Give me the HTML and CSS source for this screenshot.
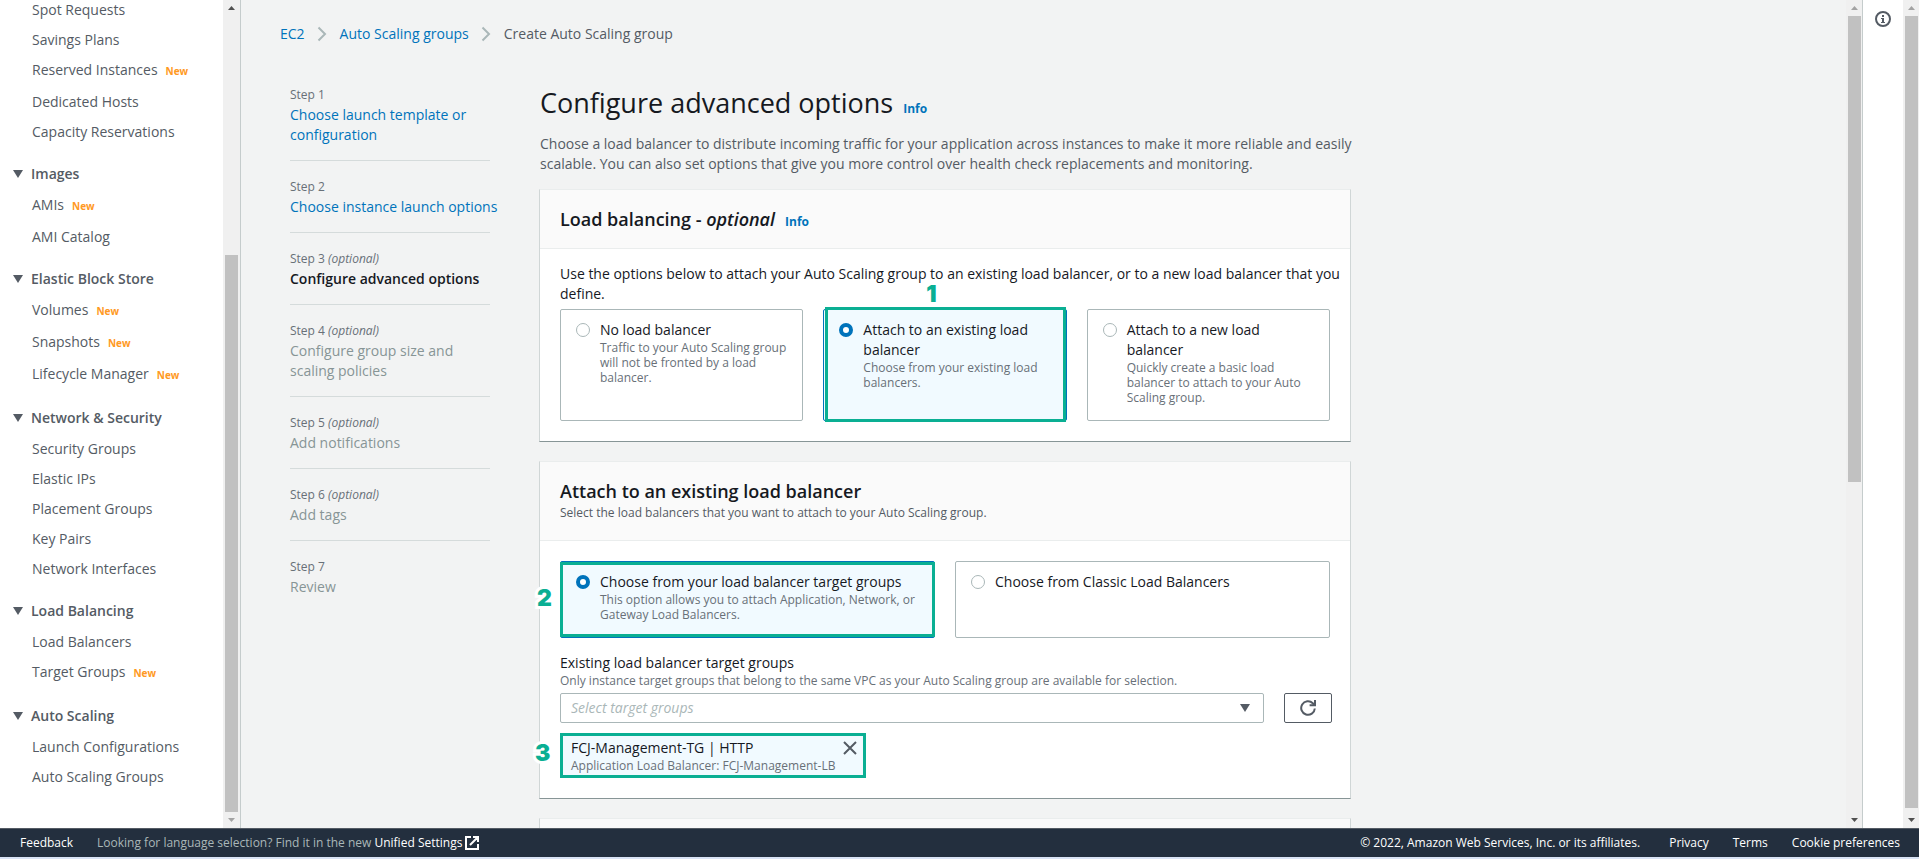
FILE: index.html
```
<!DOCTYPE html>
<html lang="en">
<head>
<meta charset="utf-8">
<title>Create Auto Scaling group | EC2</title>
<link rel="stylesheet" href="styles.css">
</head>
<body>
<div class="app">
  <div class="workspace">
    <nav class="sidebar" aria-label="EC2">
      <div class="sidebar-content">
        <ul class="nav-list">
          <li><a href="#">Spot Requests</a></li>
          <li><a href="#">Savings Plans</a></li>
          <li class="has-new"><a href="#">Reserved Instances</a><span class="new">New</span></li>
          <li><a href="#">Dedicated Hosts</a></li>
          <li><a href="#">Capacity Reservations</a></li>
        </ul>
        <button class="nav-heading" type="button"><span class="caret"></span>Images</button>
        <ul class="nav-list">
          <li class="has-new"><a href="#">AMIs</a><span class="new">New</span></li>
          <li><a href="#">AMI Catalog</a></li>
        </ul>
        <button class="nav-heading" type="button"><span class="caret"></span>Elastic Block Store</button>
        <ul class="nav-list">
          <li class="has-new"><a href="#">Volumes</a><span class="new">New</span></li>
          <li class="has-new"><a href="#">Snapshots</a><span class="new">New</span></li>
          <li class="has-new"><a href="#">Lifecycle Manager</a><span class="new">New</span></li>
        </ul>
        <button class="nav-heading" type="button"><span class="caret"></span>Network &amp; Security</button>
        <ul class="nav-list">
          <li><a href="#">Security Groups</a></li>
          <li><a href="#">Elastic IPs</a></li>
          <li><a href="#">Placement Groups</a></li>
          <li><a href="#">Key Pairs</a></li>
          <li><a href="#">Network Interfaces</a></li>
        </ul>
        <button class="nav-heading" type="button"><span class="caret"></span>Load Balancing</button>
        <ul class="nav-list">
          <li><a href="#">Load Balancers</a></li>
          <li class="has-new"><a href="#">Target Groups</a><span class="new">New</span></li>
        </ul>
        <button class="nav-heading" type="button"><span class="caret"></span>Auto Scaling</button>
        <ul class="nav-list">
          <li><a href="#">Launch Configurations</a></li>
          <li><a href="#">Auto Scaling Groups</a></li>
        </ul>
      </div>
      <div class="scrollbar scrollbar-nav"><span class="arrow up"></span><div class="track track-nav"><span class="thumb"></span></div><span class="arrow down dim"></span></div>
    </nav>

    <main class="main">
      <div class="page">
        <nav class="breadcrumb" aria-label="Breadcrumb">
          <a href="#">EC2</a>
          <svg class="chevron" viewBox="0 0 10 16"><path d="M1.5 1.5 8 8l-6.500 6.500"/></svg>
          <a href="#">Auto Scaling groups</a>
          <svg class="chevron" viewBox="0 0 10 16"><path d="M1.500 1.500 8 8l-6.500 6.500"/></svg>
          <span>Create Auto Scaling group</span>
        </nav>
        <div class="wizard">
          <ol class="steps">
            <li><span class="step-label">Step 1</span><a href="#">Choose launch template or configuration</a></li>
            <li><span class="step-label">Step 2</span><a class="one-line" href="#">Choose instance launch options</a></li>
            <li><span class="step-label">Step 3 <i>(optional)</i></span><b>Configure advanced options</b></li>
            <li><span class="step-label">Step 4 <i>(optional)</i></span><span class="pending">Configure group size and scaling policies</span></li>
            <li><span class="step-label">Step 5 <i>(optional)</i></span><span class="pending">Add notifications</span></li>
            <li><span class="step-label">Step 6 <i>(optional)</i></span><span class="pending">Add tags</span></li>
            <li><span class="step-label">Step 7</span><span class="pending">Review</span></li>
          </ol>
          <div class="content">
            <header class="page-header">
              <h1>Configure advanced options</h1><a class="info" href="#">Info</a>
            </header>
            <p class="intro">Choose a load balancer to distribute incoming traffic for your application across instances to make it more reliable and easily scalable. You can also set options that give you more control over health check replacements and monitoring.</p>

            <section class="card">
              <header class="card-header"><div class="card-title"><h2>Load balancing - <i>optional</i></h2><a class="info" href="#">Info</a></div></header>
              <div class="card-body">
                <p class="lead">Use the options below to attach your Auto Scaling group to an existing load balancer, or to a new load balancer that you define.</p>
                <div class="tiles three">
                  <label class="tile">
                    <input type="radio" name="lb">
                    <span class="tile-text"><span class="tile-title">No load balancer</span><span class="hint">Traffic to your Auto Scaling group will not be fronted by a load balancer.</span></span>
                  </label>
                  <label class="tile selected">
                    <input type="radio" name="lb" checked>
                    <span class="tile-text"><span class="tile-title">Attach to an existing load balancer</span><span class="hint">Choose from your existing load balancers.</span></span>
                    <span class="marker marker-lb"></span><span class="marker-number number-top">1</span>
                  </label>
                  <label class="tile">
                    <input type="radio" name="lb">
                    <span class="tile-text"><span class="tile-title">Attach to a new load balancer</span><span class="hint">Quickly create a basic load balancer to attach to your Auto Scaling group.</span></span>
                  </label>
                </div>
              </div>
            </section>

            <section class="card">
              <header class="card-header"><h2>Attach to an existing load balancer</h2><p class="card-sub">Select the load balancers that you want to attach to your Auto Scaling group.</p></header>
              <div class="card-body">
                <div class="tiles two">
                  <label class="tile selected">
                    <input type="radio" name="kind" checked>
                    <span class="tile-text"><span class="tile-title">Choose from your load balancer target groups</span><span class="hint">This option allows you to attach Application, Network, or Gateway Load Balancers.</span></span>
                    <span class="marker marker-kind"></span><span class="marker-number number-left">2</span>
                  </label>
                  <label class="tile">
                    <input type="radio" name="kind">
                    <span class="tile-text"><span class="tile-title">Choose from Classic Load Balancers</span></span>
                  </label>
                </div>
                <div class="field">
                  <label class="field-label" for="groups">Existing load balancer target groups</label>
                  <p class="hint">Only instance target groups that belong to the same VPC as your Auto Scaling group are available for selection.</p>
                  <div class="field-row">
                    <div class="select-wrap"><select id="groups" class="select"><option>Select target groups</option></select><span class="caret"></span></div>
                    <button class="refresh" type="button" aria-label="Refresh">
                      <svg viewBox="0 0 16 16"><path d="M14.800 8.500A6.800 6.800 0 1 1 12.800 3.200L14.500 5"/><path d="M15 0v5.200H9.600"/></svg>
                    </button>
                  </div>
                </div>
                <div class="token">
                  <div class="token-text"><span class="tile-title">FCJ-Management-TG | HTTP</span><span class="hint">Application Load Balancer: FCJ-Management-LB</span></div>
                  <button class="dismiss" type="button" aria-label="Remove FCJ-Management-TG"><svg viewBox="0 0 14 14"><path d="M1 1l12 12M13 1 1 13"/></svg></button>
                  <span class="marker-number number-left">3</span>
                </div>
              </div>
            </section>

            <section class="card"><header class="card-header"></header></section>
          </div>
        </div>
      </div>
      <div class="scrollbar"><span class="arrow up dim"></span><div class="track track-main"><span class="thumb"></span></div><span class="arrow down"></span></div>
    </main>

    <aside class="tools">
      <button class="info-toggle" type="button" aria-label="Open help panel">
        <svg viewBox="0 0 16 16"><circle cx="8" cy="8" r="7"/><path d="M7 4h2v2H7zM6 7h3v4h1v1H6v-1h1V8H6z"/></svg>
      </button>
    </aside>
    <div class="scrollbar"><span class="arrow up dim"></span><div class="track track-window"><span class="thumb"></span></div><span class="arrow down"></span></div>
  </div>

  <footer class="footer">
    <a class="feedback" href="#">Feedback</a>
    <span class="language">Looking for language selection? Find it in the new <a href="#">Unified Settings<svg viewBox="0 0 14 14"><path d="M6 1H1v12h12V8M8 1h5v5M13 1 5 9"/></svg></a></span>
    <span class="legal">© 2022, Amazon Web Services, Inc. or its affiliates.</span>
    <a href="#">Privacy</a>
    <a href="#">Terms</a>
    <a href="#">Cookie preferences</a>
  </footer>
</div>
</body>
</html>
```

FILE: styles.css
```
* { box-sizing: border-box; }

body {
  margin: 0;
  font: 14px/20px "Open Sans", "Noto Sans", sans-serif;
  color: #16191f;
  background: #d9e3f5;
}

a { color: #0073bb; text-decoration: none; }
b { font-weight: 600; }
button { font: inherit; color: inherit; cursor: pointer; }
h1, h2, p, ul, ol { margin: 0; padding: 0; }
ul, ol { list-style: none; }

.app { height: 100vh; padding-bottom: 2px; display: flex; flex-direction: column; overflow: hidden; }
.workspace { flex: 1; min-height: 0; display: flex; background: #fff; }

/* Scrollbars */
.scrollbar { flex: none; width: 16px; padding-left: 1px; background: #f0f0f0; display: flex; flex-direction: column; align-items: center; }
.scrollbar-nav { width: 17px; padding-left: 0; }
.arrow { width: 7px; height: 4px; background: #505050; }
.arrow.dim { background: #a3a3a3; }
.arrow.up { margin: 6px 0; clip-path: polygon(50% 0, 100% 100%, 0 100%); }
.arrow.down { margin: 6px 0; clip-path: polygon(0 0, 100% 0, 50% 100%); }
.track { flex: 1; display: flex; flex-direction: column; }
.thumb { width: 13px; background: #c1c1c1; }
.track-nav { justify-content: flex-end; }
.track-nav .thumb { height: 70%; }
.track-main .thumb { height: 58.5%; }
.track-window .thumb { height: 99.5%; }

/* Sidebar */
.sidebar { flex: none; width: 241px; display: flex; border-right: 1px solid #c5cccc; overflow: hidden; }
.sidebar-content { flex: 1; color: #545b64; }
.nav-list { padding-left: 32px; display: flex; flex-direction: column; gap: 10px; }
.nav-list a { color: #545b64; }
.nav-list li { display: flex; align-items: flex-start; height: 20px; }
.nav-list .has-new { height: 22px; }
.new { margin-left: 8px; padding-top: 1px; font-size: 10px; font-weight: 700; color: #ff9923; }
.nav-heading {
  display: flex; align-items: center; gap: 8px;
  margin: 22px 0 11px; padding: 0 0 0 13px; height: 20px;
  border: 0; background: none; font-weight: 600;
}
.caret { width: 10px; height: 8px; background: #545b64; clip-path: polygon(0 0, 100% 0, 50% 100%); }

/* Main column */
.main { flex: 1; min-width: 0; display: flex; background: #f2f3f3; border-right: 1px solid #c5cccc; overflow: hidden; }
.page { flex: 1; min-width: 0; padding: 24px 39px 0; }
.breadcrumb { display: flex; align-items: center; color: #545b64; }
.chevron { width: 10px; height: 16px; margin: 0 13px 0 12px; fill: none; stroke: #aab7b8; stroke-width: 2; }
.wizard { display: grid; grid-template-columns: 200px minmax(0, 812px); gap: 49px; padding: 41px 10px 0; }

.steps li { padding-bottom: 15px; margin-bottom: 16px; border-bottom: 1px solid #d5dbdb; display: flex; flex-direction: column; }
.steps li:last-child { border: 0; }
.one-line { white-space: nowrap; }
.step-label { font-size: 12px; color: #687078; }
.pending { color: #879596; }

.page-header, .card-title { display: flex; align-items: baseline; gap: 10px; }
.page-header { padding-left: 1px; }
h1 { font-size: 27px; line-height: 36px; font-weight: 400; }
h2 { font-size: 18px; line-height: 22px; font-weight: 600; }
.info { font-size: 12px; line-height: 16px; font-weight: 700; }
.intro { margin: 13px -10px 0 1px; color: #545b64; }

.card {
  margin-bottom: 19px; background: #fff;
  border: 1px solid #d0d6d6; border-top-color: #eaeded; border-bottom-color: #879596;
}
.intro + .card { margin-top: 15px; }
.card-header { min-height: 40px; padding: 18px 20px; background: #fafafa; border-bottom: 1px solid #eaeded; }
.card-sub { margin-top: 2px; font-size: 12px; line-height: 18px; color: #545b64; }
.card-body { padding: 15px 20px 20px; }
.lead { margin-right: -18px; }

.tiles { display: grid; gap: 20px; }
.three { grid-template-columns: repeat(3, 1fr); margin-top: 5px; }
.two { grid-template-columns: repeat(2, 1fr); margin-top: 5px; }
.tile { position: relative; display: flex; gap: 10px; padding: 10px 15px 15px; border: 1px solid #aab7b8; border-radius: 2px; }
.tile.selected { background: #f1faff; border-color: #0073bb; }
.tile-text { display: flex; flex-direction: column; }
.hint { font-size: 12px; line-height: 15px; color: #687078; }
.tile input {
  appearance: none; flex: none; width: 14px; height: 14px; margin: 3px 0;
  border: 1px solid #aab7b8; border-radius: 50%; background: #fff;
}
.tile input:checked { border: 4px solid #0073bb; }

/* Numbered markers drawn over the form */
.marker { position: absolute; border: 3px solid #0aaf93; }
.marker-lb { inset: -3px 0 -2px 1px; }
.marker-kind { inset: 0 -1px 0 -1px; }
.marker-number {
  position: absolute; font-family: Inter, "Open Sans", sans-serif; font-size: 23px; line-height: 18px; font-weight: 900; color: #0aaf93;
  -webkit-text-stroke: 6px #fff; paint-order: stroke fill;
}
.number-top { left: 102px; top: -25px; }
.number-left { left: -24px; top: 27px; }
.token .number-left { left: -28px; top: 8px; }

.field { margin-top: 15px; }
.field-label { display: block; }
.field-row { display: flex; gap: 20px; margin: 5px -2px 0 0; }
.select-wrap { position: relative; flex: 1; display: flex; }
.select-wrap .caret { position: absolute; right: 14px; top: 11px; pointer-events: none; }
.select {
  appearance: none; width: 100%; height: 30px; padding: 0 10px;
  font: italic 14px/20px "Open Sans", "Noto Sans", sans-serif; color: #aab7b8;
  border: 1px solid #aab7b8; border-radius: 2px; background: #fff;
}
.refresh { width: 48px; padding: 0; display: flex; align-items: center; justify-content: center; border: 1px solid #545b64; border-radius: 2px; background: #fff; }
.refresh svg { width: 16px; height: 16px; fill: none; stroke: #545b64; stroke-width: 2; }

.token {
  position: relative; display: flex; justify-content: space-between; align-items: flex-start;
  width: 306px; height: 45px; margin-top: 10px; padding: 2px 5px 0 8px;
  border: 3px solid #0aaf93; background: #f1faff;
}
.token-text { display: flex; flex-direction: column; white-space: nowrap; }
.dismiss { padding: 3px 1px; border: 0; background: none; display: flex; }
.dismiss svg { width: 14px; height: 14px; fill: none; stroke: #545b64; stroke-width: 2; }

/* Help panel strip */
.tools { flex: none; width: 40px; padding-top: 11px; display: flex; flex-direction: column; align-items: center; }
.info-toggle { padding: 0; border: 0; background: none; display: flex; }
.info-toggle svg { width: 16px; height: 16px; fill: #545b64; }
.info-toggle circle { fill: none; stroke: #545b64; stroke-width: 2; }

/* Footer */
.footer {
  flex: none; height: 29px; padding: 0 19px 0 20px; display: flex; align-items: center; gap: 24px;
  background: #232f3e; border-top: 1px solid #545b64; color: #fff; font-size: 12px;
}
.footer a { color: #fff; font-weight: 500; }
.language { flex: 1; color: #aab7b8; }
.language svg { width: 14px; height: 14px; margin-left: 3px; vertical-align: -3px; fill: none; stroke: #fff; stroke-width: 2; }
.legal { font-weight: 500; margin-right: 5px; }
```
